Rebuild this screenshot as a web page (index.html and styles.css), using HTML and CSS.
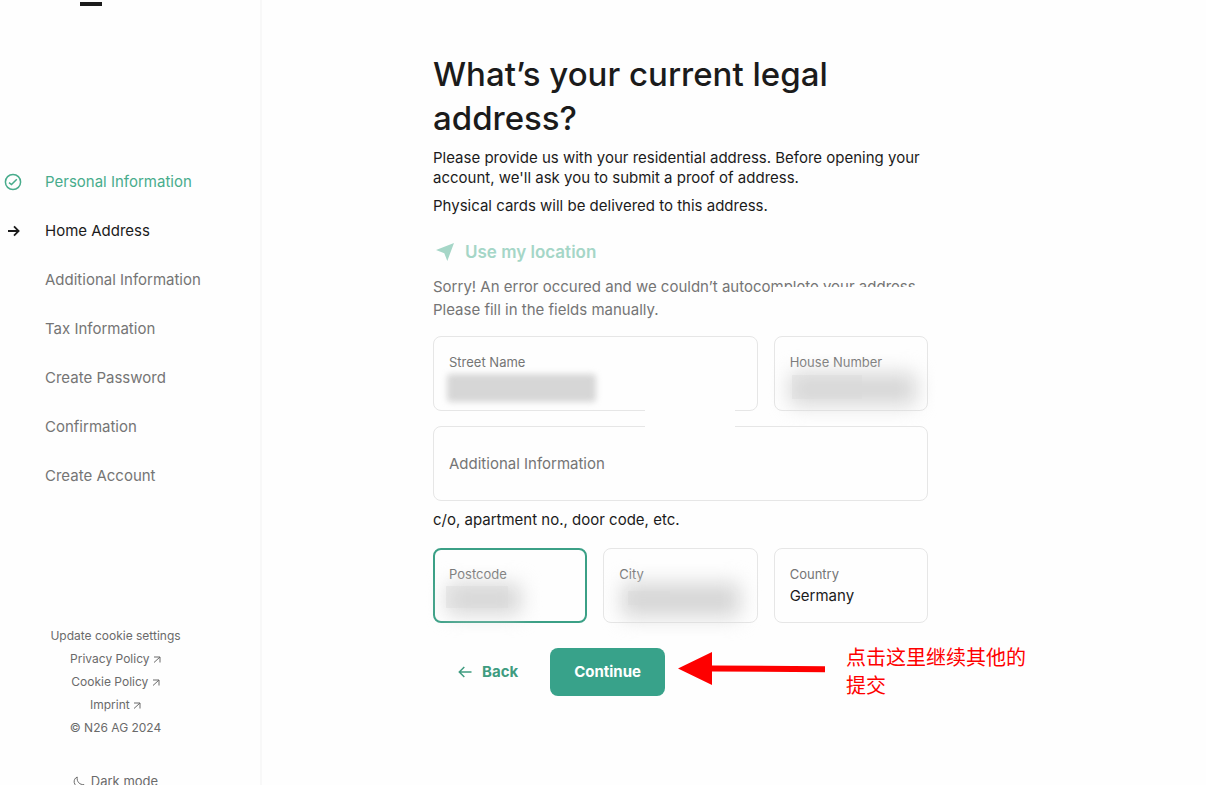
FILE: index.html
```html
<!DOCTYPE html>
<html lang="en">
<head>
  <meta charset="UTF-8">
  <title>Home Address</title>
  <link rel="stylesheet" href="styles.css">
</head>
<body>
  <div class="page">
    <aside class="sidebar">
      <div class="logo"></div>
      <nav>
        <ul class="steps">
          <li class="step done">
            <svg class="step-icon" width="18" height="18" viewBox="0 0 18 18" fill="none" stroke="currentColor" stroke-width="1.5"><circle cx="9" cy="9" r="7.6"/><path d="M5 9.600l2.500 1.900 5.300-5.300"/></svg>
            Personal Information
          </li>
          <li class="step current">
            <svg class="step-icon" width="18" height="18" viewBox="0 0 18 18" fill="none" stroke="currentColor" stroke-width="1.8"><path d="M4 9h10.500M10 4.400L14.600 9 10 13.600"/></svg>
            Home Address
          </li>
          <li class="step">Additional Information</li>
          <li class="step">Tax Information</li>
          <li class="step">Create Password</li>
          <li class="step">Confirmation</li>
          <li class="step">Create Account</li>
        </ul>
      </nav>
      <footer class="footer">
        <button type="button" class="plain">Update cookie settings</button>
        <a href="#privacy">Privacy Policy <svg width="8" height="7" viewBox="0 0 8 7" fill="none" stroke="currentColor"><path d="M1 1h6v5.500M7 1L1 6.500"/></svg></a>
        <a href="#cookies">Cookie Policy <svg width="8" height="7" viewBox="0 0 8 7" fill="none" stroke="currentColor"><path d="M1 1h6v5.500M7 1L1 6.500"/></svg></a>
        <a href="#imprint">Imprint <svg width="8" height="7" viewBox="0 0 8 7" fill="none" stroke="currentColor"><path d="M1 1h6v5.500M7 1L1 6.500"/></svg></a>
        <span>© N26 AG 2024</span>
        <button type="button" class="plain dark-mode">
          <svg width="12" height="12" viewBox="0 0 12 12" fill="none" stroke="currentColor"><path d="M4.200 1C1.800 2 .9 4.200 1.200 6.400c.5 3 3.200 4.800 6 4.400 1.500-.2 2.800-1 3.600-2.300C7 9 3.500 6 4.200 1z"/></svg>
          Dark mode
        </button>
      </footer>
    </aside>

    <main class="main">
      <form class="address-form">
        <h1>What’s your current legal address?</h1>
        <p class="intro">Please provide us with your residential address. Before opening your account, we'll ask you to submit a proof of address.</p>
        <p class="intro">Physical cards will be delivered to this address.</p>

        <button type="button" class="location" disabled>
          <svg width="18" height="18" viewBox="0 0 18 18" fill="currentColor"><path d="M18 0L11.300 18 8.300 10.200 0 7z"/></svg>
          Use my location
        </button>
        <p class="error">Sorry! An error occured and we couldn’t autocomplete your address. Please fill in the fields manually.<span class="erase erase-text"></span></p>

        <div class="fields">
          <div class="field wide">
            <label for="street">Street Name</label>
            <input id="street" type="text">
            <span class="smudge smudge-street"></span>
            <span class="erase erase-border"></span>
          </div>
          <div class="field">
            <label for="house">House Number</label>
            <input id="house" type="text">
            <span class="smudge smudge-house"></span>
          </div>
          <div class="field full">
            <input class="only" id="extra" type="text" placeholder="Additional Information" aria-label="Additional Information" aria-describedby="hint">
          </div>
          <p class="hint full" id="hint">c/o, apartment no., door code, etc.</p>
          <div class="field active">
            <label for="postcode">Postcode</label>
            <input id="postcode" type="text">
            <span class="smudge smudge-postcode"></span>
          </div>
          <div class="field">
            <label for="city">City</label>
            <input id="city" type="text">
            <span class="smudge smudge-city"></span>
          </div>
          <div class="field">
            <label for="country">Country</label>
            <input id="country" type="text" value="Germany">
          </div>
        </div>

        <div class="actions">
          <a class="back" href="#back">
            <svg width="14" height="12" viewBox="0 0 14 12" fill="none" stroke="currentColor" stroke-width="1.500"><path d="M13.500 6H1.500M6.300 1L1.300 6l5 5"/></svg>
            Back
          </a>
          <button type="submit" class="continue">Continue</button>
          <div class="note">
            <svg width="148" height="36" viewBox="0 0 148 36" fill="#fe0000"><path d="M0 17.500L34 1v13.500l113 .8v6L34 20.500V34z"/></svg>
            <p>点击这里继续其他的提交</p>
          </div>
        </div>
      </form>
    </main>
  </div>
</body>
</html>
```

FILE: styles.css
```css
* { box-sizing: border-box; }

body {
  margin: 0;
  background: #fefefe;
  color: #1b1b1b;
  font-family: Inter, "Liberation Sans", "Noto Sans CJK SC", sans-serif;
  font-size: 15px;
  line-height: 20px;
}

p, h1, ul { margin: 0; padding: 0; }
a { color: inherit; text-decoration: none; }
button, input { font: inherit; color: inherit; }

.page { display: flex; height: 100vh; overflow: hidden; }

/* sidebar */
.sidebar {
  flex: 0 0 262px;
  padding: 2px 29px 0 0;
  border-right: 2px solid #f8f8f8;
  overflow: hidden;
}
.logo { width: 22px; height: 4px; margin-left: 80px; background: #1b1b1b; }
.steps { list-style: none; margin-top: 164px; display: grid; gap: 25px; }
.step { position: relative; padding-left: 45px; line-height: 24px; color: #757575; }
.step-icon { position: absolute; left: 4px; top: 3px; }
.done { color: #48ac8c; }
.current { color: #1b1b1b; }

.footer {
  display: flex;
  flex-direction: column;
  align-items: center;
  margin-top: 136px;
  font-size: 12px;
  line-height: 23px;
  color: #6a6a6a;
}
.plain { border: 0; padding: 0; background: none; }
.dark-mode { display: flex; align-items: center; gap: 6px; margin-top: 31px; font-size: 13px; }

/* form */
.main { flex: 1; padding: 52px 24px 0 171px; }
.address-form { max-width: 495px; }
h1 { margin-bottom: 8px; font-size: 33px; line-height: 44px; font-weight: 500; }
.intro { margin-bottom: 8px; }

.location {
  display: flex;
  align-items: center;
  gap: 11px;
  margin-top: 24px;
  padding: 0 3px;
  border: 0;
  background: none;
  color: #a5d6c7;
  font-size: 17px;
  line-height: 24px;
  font-weight: 600;
}
.error { position: relative; margin: 11px 0 15px; line-height: 23px; color: #757575; }

.fields { display: grid; grid-template-columns: repeat(3, 1fr); gap: 15px 16px; }
.wide { grid-column: span 2; }
.full { grid-column: 1 / -1; }
.field {
  position: relative;
  padding: 15px;
  border: 1px solid #e6e6e6;
  border-radius: 8px;
}
.field label { display: block; font-size: 13px; line-height: 20px; color: #757575; }
.field input { display: block; width: 100%; height: 23px; padding: 0; border: 0; outline: 0; background: none; }
.field .only { height: 43px; }
.only::placeholder { color: #757575; opacity: 1; }
.active { padding: 14px; border: 2px solid #3ba086; }
.hint { margin: -6px 0 3px; }

/* blurred-out values */
.smudge { position: absolute; }
.smudge::before { content: ""; position: absolute; inset: 0; border-radius: 4px; background: #d6d6d6; filter: blur(10px); }
.smudge::after { content: ""; position: absolute; background: #d9d9d9; opacity: 0.4; }
.smudge-street { left: 13px; top: 37px; width: 149px; height: 28px; }
.smudge-street::before { filter: blur(3px); }
.smudge-house { left: 15px; top: 36px; width: 126px; height: 32px; }
.smudge-house::after { left: 2px; top: 2px; width: 70px; height: 24px; }
.smudge-postcode { left: 12px; top: 34px; width: 74px; height: 30px; }
.smudge-postcode::after { left: -1px; top: 2px; width: 62px; height: 22px; }
.smudge-city { left: 18px; top: 34px; width: 118px; height: 34px; }
.smudge-city::after { left: 6px; top: 8px; width: 42px; height: 14px; }

/* wiped patches */
.erase { position: absolute; background: #fefefe; }
.erase-text { left: 340px; right: 0; top: 12px; height: 11px; }
.erase-border { left: 211px; top: 70px; width: 90px; height: 24px; z-index: 1; }

.actions { position: relative; display: flex; align-items: center; gap: 32px; margin-top: 25px; padding-left: 25px; }
.back { display: flex; align-items: center; gap: 10px; color: #3f9c80; font-weight: 700; }
.continue {
  height: 48px;
  padding: 0 24px;
  border: 0;
  border-radius: 8px;
  background: #38a28a;
  color: #fff;
  font-weight: 700;
}

/* arrow and remark beside the button */
.note { position: absolute; left: 245px; top: -5px; display: flex; align-items: flex-start; gap: 20px; color: #fe0000; }
.note svg { flex: none; margin-top: 8px; }
.note p { width: 182px; font-family: "Noto Sans CJK SC", sans-serif; font-size: 20px; line-height: 28px; }
```
